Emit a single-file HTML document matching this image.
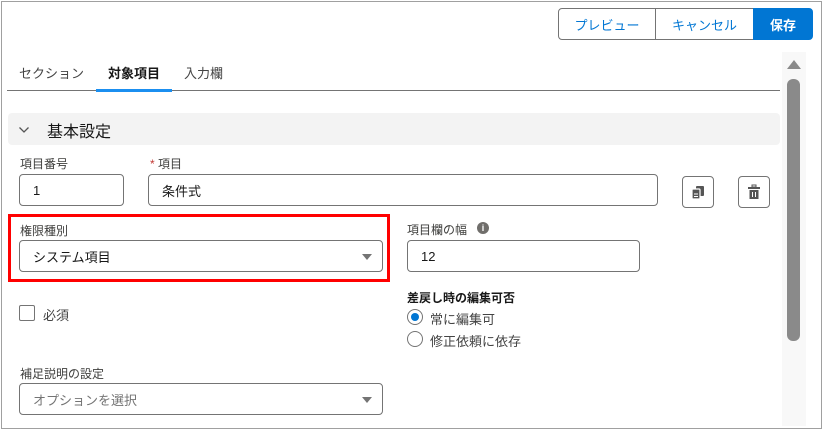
<!DOCTYPE html>
<html><head><meta charset="utf-8"><style>
*{box-sizing:border-box;margin:0;padding:0}
body{width:824px;height:430px;background:#fff;font-family:"Liberation Sans","Noto Sans CJK JP",sans-serif;color:#181818;position:relative;overflow:hidden;font-size:13px}
.a{position:absolute}
.frame{left:1px;top:1px;width:821px;height:428px;border:1px solid #a0a0a0}
.btn{top:8px;height:32px;border:1px solid #747474;display:flex;align-items:center;justify-content:center;color:#0176d3;font-size:13px;background:#fff}
.inp{border:1px solid #747474;border-radius:4px;height:32px;display:flex;align-items:center;padding-left:13px;font-size:13px;background:#fff}
.lbl{font-size:12px;color:#3e3e3c}
.caret{position:absolute;right:10px;top:13px;width:0;height:0;border-left:5px solid transparent;border-right:5px solid transparent;border-top:6px solid #747474}
.ib{width:32px;height:32px;border:1px solid #747474;border-radius:4px;display:flex;align-items:center;justify-content:center}
</style></head><body>
<div class="a frame"></div>
<div class="a btn" style="left:558px;width:98px;border-radius:4px 0 0 4px">プレビュー</div>
<div class="a btn" style="left:655px;width:99px;border-left:1px solid #747474">キャンセル</div>
<div class="a btn" style="left:753px;width:60px;background:#0176d3;border-color:#0176d3;color:#fff;border-radius:0 4px 4px 0;font-weight:bold">保存</div>

<div class="a" style="left:782px;top:52px;width:24px;height:374px;background:#f8f8f8"></div>
<div class="a" style="left:787px;top:60px;width:0;height:0;border-left:7px solid transparent;border-right:7px solid transparent;border-bottom:9px solid #8a8a8a"></div>
<div class="a" style="left:787px;top:79px;width:13px;height:262px;background:#8a8a8a;border-radius:6px"></div>

<div class="a" style="left:19px;top:63px;font-size:13px;color:#444">セクション</div>
<div class="a" style="left:108px;top:63px;font-size:13px;font-weight:bold">対象項目</div>
<div class="a" style="left:184px;top:63px;font-size:13px;color:#444">入力欄</div>
<div class="a" style="left:7px;top:90px;width:773px;height:1px;background:#747474"></div>
<div class="a" style="left:96px;top:89px;width:76px;height:3px;background:#1b8ff0"></div>

<div class="a" style="left:8px;top:113px;width:772px;height:32px;background:#f3f3f3;border-radius:4px"></div>
<svg class="a" style="left:18px;top:125px" width="12" height="10" viewBox="0 0 12 10"><path d="M1.5 2.5 L6 7 L10.5 2.5" fill="none" stroke="#555" stroke-width="1.3"/></svg>
<div class="a" style="left:47px;top:118px;font-size:16px">基本設定</div>

<div class="a lbl" style="left:20px;top:155px">項目番号</div>
<div class="a lbl" style="left:150px;top:155px"><span style="color:#c23934">*</span> 項目</div>
<div class="a inp" style="left:19px;top:174px;width:105px">1</div>
<div class="a inp" style="left:148px;top:174px;width:510px">条件式</div>
<div class="a ib" style="left:682px;top:176px"><svg width="16" height="16" viewBox="0 0 16 16"><rect x="6" y="2" width="8" height="10" rx="1" fill="#555"/><rect x="2" y="5" width="8" height="10" rx="1" fill="#555" stroke="#fff" stroke-width="1.2"/><path d="M4 10h4M4 12.5h4" stroke="#fff"/></svg></div>
<div class="a ib" style="left:738px;top:176px"><svg width="14" height="16" viewBox="0 0 14 16"><rect x="1" y="3" width="12" height="2" fill="#555"/><rect x="5" y="1" width="4" height="2" fill="none" stroke="#555"/><rect x="2.5" y="6" width="9" height="9" fill="#555"/><path d="M5.5 8v5M8.5 8v5" stroke="#fff"/></svg></div>

<div class="a" style="left:8px;top:214px;width:382px;height:68px;border:3px solid #f00"></div>
<div class="a lbl" style="left:20px;top:222px">権限種別</div>
<div class="a inp" style="left:19px;top:240px;width:364px">システム項目<div class="caret"></div></div>

<div class="a lbl" style="left:407px;top:221px">項目欄の幅</div>
<div class="a" style="left:477px;top:222px;width:12px;height:12px;border-radius:50%;background:#706e6b;color:#fff;font-size:9px;font-weight:bold;text-align:center;line-height:12px">i</div>
<div class="a inp" style="left:407px;top:240px;width:233px">12</div>

<div class="a" style="left:19px;top:305px;width:16px;height:16px;border:1px solid #747474;border-radius:2px"></div>
<div class="a" style="left:43px;top:305px;font-size:13px;color:#444">必須</div>

<div class="a" style="left:407px;top:289px;font-size:12px;font-weight:bold">差戻し時の編集可否</div>
<div class="a" style="left:407px;top:309px;width:16px;height:16px;border:1px solid #747474;border-radius:50%"><div style="position:absolute;left:3px;top:3px;width:8px;height:8px;border-radius:50%;background:#0176d3"></div></div>
<div class="a" style="left:430px;top:309px;font-size:13px;color:#444">常に編集可</div>
<div class="a" style="left:407px;top:331px;width:16px;height:16px;border:1px solid #747474;border-radius:50%"></div>
<div class="a" style="left:430px;top:331px;font-size:13px;color:#444">修正依頼に依存</div>

<div class="a lbl" style="left:20px;top:365px">補足説明の設定</div>
<div class="a inp" style="left:19px;top:383px;width:364px;color:#747474">オプションを選択<div class="caret"></div></div>
</body></html>
